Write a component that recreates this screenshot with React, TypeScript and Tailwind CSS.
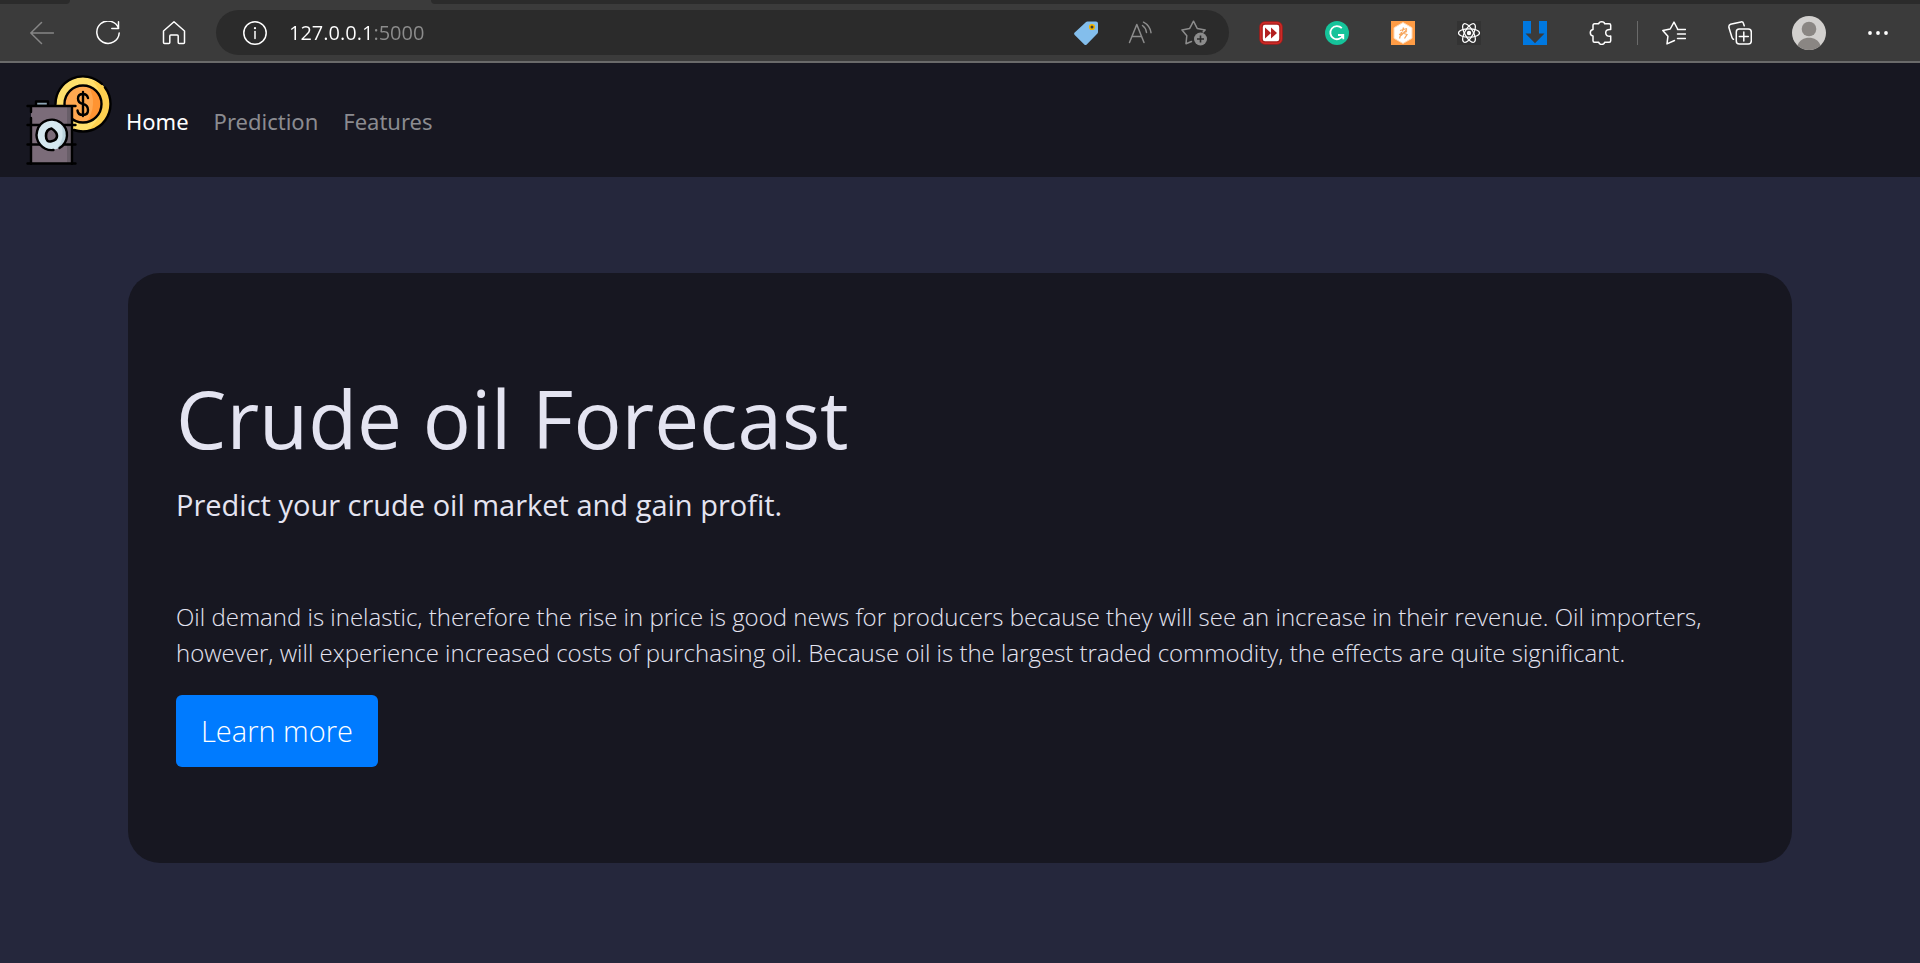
import React from "react";

const line = {
  fill: "none",
  stroke: "currentColor",
  strokeWidth: 1.5,
  strokeLinecap: "round" as const,
  strokeLinejoin: "round" as const,
};

function Icon({ children, size = "size-6" }: { children: React.ReactNode; size?: string }) {
  return (
    <svg viewBox="0 0 24 24" className={`${size} shrink-0`} aria-hidden="true">
      {children}
    </svg>
  );
}

function ToolButton({
  label,
  width = "w-[66px]",
  color = "text-white",
  children,
}: {
  label: string;
  width?: string;
  color?: string;
  children: React.ReactNode;
}) {
  return (
    <button type="button" aria-label={label} className={`flex h-full shrink-0 items-center justify-center ${width} ${color}`}>
      {children}
    </button>
  );
}

function TabStrip() {
  return (
    <div className="flex h-1 bg-[#3b3b3b]">
      <div className="w-[70px] rounded-br bg-[#2b2b2b]" />
      <div className="w-[361px]" />
      <div className="flex-1 rounded-bl bg-[#2b2b2b]" />
    </div>
  );
}

function AddressBar() {
  return (
    <div className="flex h-[45px] min-w-0 flex-1 items-center rounded-full bg-[#2b2b2b] pr-2 pl-[6px]">
      <ToolButton label="Site information">
        <Icon>
          <circle cx="12" cy="12" r="11.2" {...line} />
          <path d="M12 10.5v7" {...line} />
          <circle cx="12" cy="7.2" r="1.1" fill="currentColor" />
        </Icon>
      </ToolButton>
      <input
        aria-label="Address"
        defaultValue="127.0.0.1:5000"
        className="min-w-0 flex-1 bg-linear-to-r from-white from-[83px] to-[#8c8c8c] to-[83px] bg-clip-text pl-px font-['Open_Sans',sans-serif] text-xl text-transparent outline-none"
      />
      <ToolButton label="Shopping" width="w-[54px]">
        <Icon>
          <path d="M13.5.5H22q2 0 2 2V11q0 1-.8 1.8L12.7 23.4q-1.2 1.2-2.4 0L.7 14q-1.2-1.2 0-2.4L11.8 1.2Q12.500.5 13.500.5Z" fill="#83beec" />
          <circle cx="18" cy="6" r="2.3" fill="#3b3b3b" stroke="#f0b400" strokeWidth="1.6" />
        </Icon>
      </ToolButton>
      <ToolButton label="Read aloud" width="w-[54px]" color="text-[#8c8c8c]">
        <Icon>
          <path d="M1.500 21.500 8.800 3.500 16 21.500M4 15.500h9.600" {...line} />
          <path d="M14.500 4.500q3.500 2.500 4 7M15.500 1.200q6.500 3.500 7.500 10.500" {...line} />
        </Icon>
      </ToolButton>
      <ToolButton label="Add to favorites" width="w-[54px]" color="text-[#8c8c8c]">
        <svg viewBox="0 0 26 26" className="size-[26px]" aria-hidden="true">
          <path d="M10.500 21.500 5 23.700l.8-8L1 9.900l7.700-1.500L12.500 1.200l3.700 7.200 8 1.500-2 2" {...line} />
          <circle cx="19.500" cy="19" r="6.500" fill="currentColor" />
          <path d="M19.500 15.500v7M16 19h7" stroke="#2b2b2b" strokeWidth="1.600" />
        </svg>
      </ToolButton>
    </div>
  );
}

function Toolbar() {
  return (
    <header className="bg-[#3b3b3b]">
      <TabStrip />
      <div className="flex h-[59px] items-center border-b-2 border-[#6a6a6a] px-[9px]">
        <ToolButton label="Back" color="text-[#868686]">
          <Icon>
            <path d="M23.500 12H.8M11.500 1.500.8 12l10.700 10.500" {...line} />
          </Icon>
        </ToolButton>
        <ToolButton label="Refresh">
          <Icon>
            <path d="M22.600 7.500A11.200 11.200 0 1 0 23.200 12M22.500.8v6.700h-6.700" {...line} />
          </Icon>
        </ToolButton>
        <ToolButton label="Home">
          <Icon>
            <path d="M1.500 10 12 .8 22.500 10v11.500q0 1-1 1h-4.300q-1 0-1-1V15q0-1-1-1H8.800q-1 0-1 1v6.500q0 1-1 1H2.500q-1 0-1-1Z" {...line} />
          </Icon>
        </ToolButton>
        <div className="mx-[9px] flex min-w-0 flex-1">
          <AddressBar />
        </div>
        <ToolButton label="Video speed">
          <Icon>
            <rect x="2" y="2" width="20" height="20" rx="4" fill="#fff" stroke="#a51d1b" strokeWidth="3.600" />
            <rect x="1.800" y="1.800" width="20.400" height="20.400" rx="4.200" fill="none" stroke="#cf2b27" strokeWidth="1.500" />
            <path d="M6 6.500 12 12l-6 5.500ZM12 6.500l6 5.500-6 5.500Z" fill="#b32020" />
          </Icon>
        </ToolButton>
        <ToolButton label="Grammar check">
          <Icon>
            <circle cx="12" cy="12" r="12" fill="#15c39a" />
            <path d="M16.800 7.200A6.600 6.600 0 1 0 18 14.200M13 14h5.300v4.300" fill="none" stroke="#fff" strokeWidth="1.800" />
          </Icon>
        </ToolButton>
        <ToolButton label="Coupons">
          <Icon>
            <path d="M0 0h24v24H0Z" fill="#ff9c45" />
            <path d="M12 1.500 21 6.700v10.600L12 22.500 3 17.300V6.700Z" fill="#fff" stroke="#ffd9b5" />
            <path d="M9 9.500l7-2M12.500 6.500l-1 4M8 13.500l8-3M10.500 11 8.500 17.500M13 12.500l3 1-2.500 4M16 8.500l-6 6" fill="none" stroke="#f7a860" strokeWidth="1.300" />
          </Icon>
        </ToolButton>
        <ToolButton label="Developer tools">
          <Icon>
            <path d="M0 0h24v24H0Z" fill="#333" />
            <g fill="none" stroke="#fff" strokeWidth="1.200">
              <ellipse cx="12" cy="12" rx="10.500" ry="4.200" />
              <ellipse cx="12" cy="12" rx="10.500" ry="4.200" transform="rotate(60 12 12)" />
              <ellipse cx="12" cy="12" rx="10.500" ry="4.200" transform="rotate(120 12 12)" />
            </g>
            <circle cx="12" cy="12" r="2.200" fill="#fff" />
          </Icon>
        </ToolButton>
        <ToolButton label="Downloader">
          <Icon>
            <path d="M0 0h8v12.500H2.500L12 22.300l9.500-9.800H16V0h8v24H0Z" fill="#0078e0" />
          </Icon>
        </ToolButton>
        <ToolButton label="Extensions">
          <Icon>
            <path d="M5.500 2.800h4.300Q10 .8 12.700.8t3 2h4.500q1.500 0 1.500 1.500v4.200q-5-.5-5 3.300t5 3.300v4.600q0 1.500-1.500 1.500h-4.500q-.3 2.200-3 2.200t-3-2.200H5.500q-1.500 0-1.500-1.500V15Q1.300 14.500 1.300 11.800T4 8.600V4.300Q4 2.800 5.500 2.800Z" {...line} />
          </Icon>
        </ToolButton>
        <div className="mx-[3px] h-6 w-px shrink-0 bg-[#6a6a6a]" />
        <ToolButton label="Favorites">
          <Icon>
            <path d="M12.500 19.500 5 22.900l.9-7.600L.8 9.500 8.200 8 12 1.100 15.600 8M15.500 8.500h8M15.500 13h8M15.500 17.500h8" {...line} />
          </Icon>
        </ToolButton>
        <ToolButton label="Collections">
          <Icon>
            <rect x="8.300" y="8" width="15" height="15" rx="3" {...line} />
            <path d="M15.800 11v9M11.300 15.500h9M5.500 18.300Q4.500 18 4 16.500L.9 6.500Q.5 4 2.500 3.300L13 .9q2-.3 2.500 1.600l.7 2.300" {...line} />
          </Icon>
        </ToolButton>
        <ToolButton label="Profile" width="w-[72px]">
          <svg viewBox="0 0 34 34" className="size-[34px]" aria-hidden="true">
            <circle cx="17" cy="17" r="17" fill="#d2d0ce" />
            <circle cx="17" cy="13" r="7.300" fill="#8a8683" />
            <path d="M5.500 29.500C8.500 19 25.500 19 28.500 29.500Q23.500 34 17 34T5.500 29.500Z" fill="#8a8683" />
          </svg>
        </ToolButton>
        <ToolButton label="Settings and more">
          <Icon>
            <g fill="currentColor">
              <circle cx="4" cy="12" r="1.900" />
              <circle cx="12" cy="12" r="1.900" />
              <circle cx="20" cy="12" r="1.900" />
            </g>
          </Icon>
        </ToolButton>
      </div>
    </header>
  );
}

function Logo() {
  return (
    <svg viewBox="0 0 90 90" className="size-[90px]" role="img" aria-label="Crude oil">
      <circle cx="59" cy="29" r="27" fill="#ffe06c" />
      <path d="M76 8A27 27 0 0 1 62 56Q75 48 77 33T69 6Z" fill="#fed14f" />
      <circle cx="59" cy="29" r="18.500" fill="#ffa850" />
      <path d="M65 12q9 17-2 35 15-3 15-18T65 12Z" fill="#ff9432" />
      <g fill="none" stroke="#000" strokeWidth="2.400" strokeLinecap="round">
        <circle cx="59" cy="29" r="18.500" />
        <path d="M31.500 29A27.500 27.500 0 0 1 78 9M81 12.500A27.500 27.500 0 0 1 50 55" />
        <path d="M64 23q-1-4-5-4-5 0-5 4.500t5 5.500 5 6-5 5-5.500-4.500M59 17v24" />
      </g>
      <path d="M12 26.500h12V31H12Z" fill="#8fa6b5" stroke="#000" strokeWidth="2.400" strokeLinejoin="round" />
      <path d="M7 31h41v58H7Z" fill="#7b6c79" />
      <path d="M43 31h5v58h-5Z" fill="#685e68" />
      <path d="M7 43v46M7 31v6M48 31v58M3.500 31h48M3.500 50h48M3.500 69.500h48M3.500 88.500h48" fill="none" stroke="#000" strokeWidth="2.400" strokeLinecap="round" />
      <circle cx="27.500" cy="60" r="15" fill="#d5e8ef" />
      <path d="M37 49q5 13-4 24.500 9-4 9-13.500T37 49Z" fill="#bcd4dd" />
      <path d="M29.500 75A15.200 15.200 0 1 1 35.500 73" fill="none" stroke="#000" strokeWidth="2.400" strokeLinecap="round" />
      <path d="M27.500 53.500Q33 57 33 61t-5.500 5.300T22 61t5.500-7.500Z" fill="#7b6c79" stroke="#000" strokeWidth="2.600" strokeLinejoin="round" />
    </svg>
  );
}

function Navbar() {
  return (
    <nav className="flex items-center gap-3 bg-[#171721] px-6 py-3 font-['Noto_Sans',sans-serif] text-[22px] text-[#8b8b90]">
      <a href="#top" className="shrink-0">
        <Logo />
      </a>
      <div className="flex gap-[25px] pt-0.5">
        <a href="#home" className="text-white">Home</a>
        <a href="#prediction">Prediction</a>
        <a href="#features">Features</a>
      </div>
    </nav>
  );
}

export default function App() {
  return (
    <div className="flex min-h-screen flex-col bg-[#25273c]">
      <Toolbar />
      <Navbar />
      <main className="px-32 py-24">
        <section className="rounded-[32px] bg-[#171721] px-12 py-24 font-['Open_Sans',sans-serif] text-[#e4e4f1]">
          <h1 className="text-[80px] leading-[98px]">Crude oil Forecast</h1>
          <p className="mt-4 text-[29px] leading-[44px]">Predict your crude oil market and gain profit.</p>
          <p className="mt-[72px] text-2xl leading-9 font-light">
            Oil demand is inelastic, therefore the rise in price is good news for producers because they will see an increase in their
            revenue. Oil importers, however, will experience increased costs of purchasing oil. Because oil is the largest traded
            commodity, the effects are quite significant.
          </p>
          <a href="#learn" className="mt-6 flex h-[72px] w-fit items-center rounded-md bg-[#007bff] px-[25px] text-[29px] font-light text-white">
            Learn more
          </a>
        </section>
      </main>
    </div>
  );
}
